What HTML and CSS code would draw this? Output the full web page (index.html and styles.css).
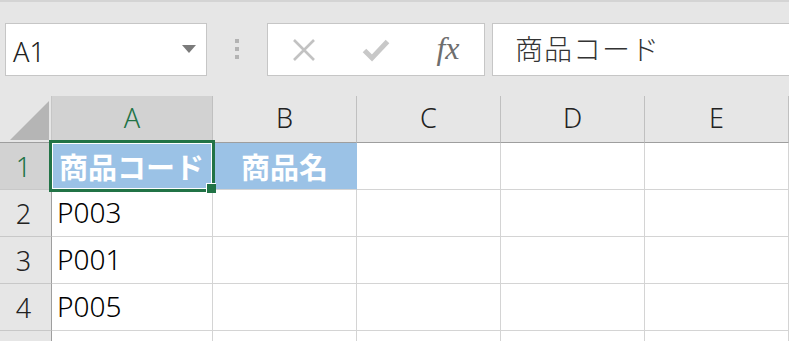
FILE: index.html
```html
<!DOCTYPE html>
<html lang="ja">
<head>
<meta charset="utf-8">
<title>Excel</title>
<link rel="stylesheet" href="styles.css">
</head>
<body>
<div class="app">
  <div class="topline"></div>
  <div class="toolbar">
    <div class="namebox">
      <span class="name">A1</span>
      <span class="caret"></span>
    </div>
    <div class="grip"><span></span><span></span><span></span></div>
    <div class="funcbox">
      <div class="fbtn">
        <svg width="24" height="24" viewBox="0 0 24 24"><path d="M2 2 L22 22 M22 2 L2 22" stroke="#c2c2c2" stroke-width="2.6" fill="none"/></svg>
      </div>
      <div class="fbtn">
        <svg width="28" height="24" viewBox="0 0 28 24"><path d="M2.5 12.5 L10 20 L25.5 3.5" stroke="#c8c8c8" stroke-width="5" fill="none"/></svg>
      </div>
      <div class="fbtn"><span class="fx">fx</span></div>
    </div>
    <div class="formula">商品コード</div>
  </div>
  <div class="sheet">
    <div class="grid">
      <div class="corner"><div class="tri"></div></div>
      <div class="ch sel">A</div>
      <div class="ch">B</div>
      <div class="ch">C</div>
      <div class="ch">D</div>
      <div class="ch">E</div>

      <div class="rh sel">1</div>
      <div class="cell fill bold">商品コード</div>
      <div class="cell fill bold center">商品名</div>
      <div class="cell"></div>
      <div class="cell"></div>
      <div class="cell"></div>

      <div class="rh">2</div>
      <div class="cell">P003</div>
      <div class="cell"></div>
      <div class="cell"></div>
      <div class="cell"></div>
      <div class="cell"></div>

      <div class="rh">3</div>
      <div class="cell">P001</div>
      <div class="cell"></div>
      <div class="cell"></div>
      <div class="cell"></div>
      <div class="cell"></div>

      <div class="rh">4</div>
      <div class="cell">P005</div>
      <div class="cell"></div>
      <div class="cell"></div>
      <div class="cell"></div>
      <div class="cell"></div>

      <div class="rh"></div>
      <div class="cell"></div>
      <div class="cell"></div>
      <div class="cell"></div>
      <div class="cell"></div>
      <div class="cell"></div>
    </div>
    <div class="selection"><div class="handle"></div></div>
  </div>
</div>
</body>
</html>
```

FILE: styles.css
```css
html, body {
  margin: 0;
  padding: 0;
  background: #e6e6e6;
  overflow: hidden;
}
body {
  font-family: "Noto Sans", "Noto Sans CJK JP", sans-serif;
  font-weight: 300;
  width: 789px;
  height: 341px;
}
.app {
  width: 789px;
  height: 341px;
  overflow: hidden;
}
.topline {
  height: 2px;
  background: #d4d4d4;
}
.toolbar {
  height: 94px;
  box-sizing: border-box;
  padding: 21px 0 0 5px;
  display: flex;
  align-items: flex-start;
}
.toolbar > * {
  flex-shrink: 0;
}
.namebox {
  width: 202px;
  height: 53px;
  box-sizing: border-box;
  border: 1px solid #c6c6c6;
  background: #fff;
  display: flex;
  align-items: center;
  justify-content: space-between;
  padding: 4px 10px 0 7px;
}
.name {
  font-size: 27px;
  color: #222;
  line-height: 1;
}
.caret {
  width: 0;
  height: 0;
  border-left: 7px solid transparent;
  border-right: 7px solid transparent;
  border-top: 8px solid #7b7b7b;
  margin-top: -5px;
}
.grip {
  margin: 16px 28px 0 28px;
  width: 4px;
  display: flex;
  flex-direction: column;
  gap: 4px;
}
.grip span {
  width: 4px;
  height: 4px;
  background: #b3b3b3;
}
.funcbox {
  width: 218px;
  height: 53px;
  box-sizing: border-box;
  border: 1px solid #c6c6c6;
  background: #fff;
  display: flex;
  margin-right: 7px;
}
.fbtn {
  width: 72px;
  display: flex;
  align-items: center;
  justify-content: center;
}
.fx {
  font-family: "Liberation Serif", serif;
  font-style: italic;
  font-weight: 400;
  font-size: 32px;
  color: #6e6e6e;
  line-height: 1;
  margin-top: -3px;
}
.formula {
  width: 320px;
  height: 53px;
  box-sizing: border-box;
  border: 1px solid #c6c6c6;
  background: #fff;
  padding: 0 0 3px 22px;
  display: flex;
  align-items: center;
  font-family: "Noto Sans CJK JP", sans-serif;
  font-size: 28px;
  color: #333;
  letter-spacing: 1px;
}
.sheet {
  position: relative;
  background: #fff;
}
.grid {
  display: grid;
  grid-template-columns: 52px 161px 144px 144px 144px 144px;
  grid-template-rows: 47px repeat(5, 47px);
}
.grid > div {
  box-sizing: border-box;
}
.corner {
  background: #e6e6e6;
  border-right: 1px solid #c6c6c6;
  border-bottom: 1px solid #9e9e9e;
  display: flex;
  justify-content: flex-end;
  align-items: flex-end;
  padding: 0 2px 2px 0;
}
.tri {
  width: 39px;
  height: 39px;
  background: #b5b5b5;
  clip-path: polygon(100% 0, 100% 100%, 0 100%);
}
.ch {
  background: #e6e6e6;
  border-right: 1px solid #c0c0c0;
  border-bottom: 1px solid #9e9e9e;
  display: flex;
  align-items: center;
  justify-content: center;
  font-size: 27px;
  color: #222;
  padding-bottom: 4px;
}
.rh {
  background: #e6e6e6;
  border-right: 1px solid #9e9e9e;
  border-bottom: 1px solid #c8c8c8;
  display: flex;
  align-items: center;
  justify-content: center;
  font-size: 27px;
  color: #222;
  padding-right: 4px;
}
.ch.sel, .rh.sel {
  background: #d2d2d2;
  color: #217346;
}
.cell {
  background: #fff;
  border-right: 1px solid #d4d4d4;
  border-bottom: 1px solid #d4d4d4;
  display: flex;
  align-items: center;
  padding-left: 5px;
  padding-bottom: 3px;
  font-size: 28px;
  color: #000;
}
.cell.fill {
  background: #9bc2e6;
  border-right-color: #9bc2e6;
  color: #fff;
  padding-bottom: 0;
}
.cell.bold {
  font-family: "Noto Sans CJK JP", sans-serif;
  font-weight: 700;
  font-size: 29px;
  padding-left: 7px;
}
.cell.center {
  justify-content: center;
  padding-left: 0;
}
.selection {
  position: absolute;
  left: 49px;
  top: 44px;
  width: 166px;
  height: 52px;
  box-sizing: border-box;
  border: 3px solid #217346;
  box-shadow: inset 0 0 0 1px #fff;
}
.handle {
  position: absolute;
  right: -4px;
  bottom: -4px;
  width: 10px;
  height: 10px;
  box-sizing: border-box;
  background: #217346;
  border-left: 1px solid #fff;
  border-top: 1px solid #fff;
}
```
